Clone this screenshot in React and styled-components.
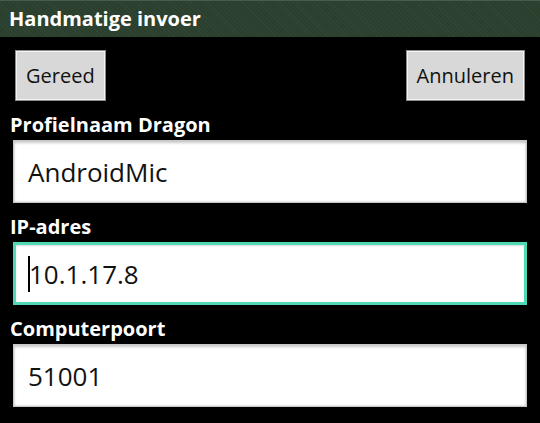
import React from 'react'
import styled, { createGlobalStyle } from 'styled-components'

const GlobalStyle = createGlobalStyle`
  html, body {
    margin: 0;
    padding: 0;
    background: #000;
  }
  body {
    font-family: 'Open Sans', 'DejaVu Sans', sans-serif;
  }
`

const Screen = styled.div`
  width: 540px;
  height: 423px;
  background: #000;
  overflow: hidden;
`

const TitleBar = styled.div`
  height: 37px;
  box-sizing: border-box;
  border-top: 1px solid #4a5a4c;
  background: #2a3f2d;
  background-image: repeating-linear-gradient(45deg, rgba(255,255,255,0.03) 0 1px, transparent 1px 3px);
  color: #fff;
  font-weight: 700;
  font-size: 20px;
  line-height: 36px;
  padding-left: 9px;
`

const ButtonRow = styled.div`
  display: flex;
  justify-content: space-between;
  padding: 13px 15px 0;
`

const Button = styled.button`
  height: 51px;
  padding: 0 9px;
  min-width: 90px;
  box-sizing: border-box;
  background: #d8d8d8;
  border: 2px solid #f4f4f4;
  outline: 1px solid #8c8c8c;
  outline-offset: -1px;
  font-family: 'Open Sans', 'DejaVu Sans', sans-serif;
  font-size: 20px;
  color: #111;
`

const Label = styled.div`
  color: #fff;
  font-weight: 700;
  font-size: 20px;
  line-height: 26px;
  padding: 11px 10px 0;
  height: 28px;
`

const Field = styled.div`
  margin: 0 13px;
  height: 63px;
  box-sizing: border-box;
  background: #fff;
  display: flex;
  align-items: center;
  font-size: 26px;
  color: #111;
  border: ${({ focused }) => (focused ? '3px solid #4fd9b5' : '1px solid #c8c8c8')};
  padding-left: ${({ focused }) => (focused ? '12px' : '14px')};
  box-shadow: ${({ focused }) => (focused ? 'inset 0 1px 2px rgba(0,0,0,0.15)' : 'inset 0 2px 3px rgba(0,0,0,0.22), inset 0 -1px 2px rgba(0,0,0,0.1)')};
`

const Caret = styled.span`
  display: inline-block;
  width: 2px;
  height: 36px;
  background: #000;
  margin-right: -1px;
`

export default function App () {
  return (
    <>
      <GlobalStyle />
      <Screen>
        <TitleBar>Handmatige invoer</TitleBar>
        <ButtonRow>
          <Button>Gereed</Button>
          <Button>Annuleren</Button>
        </ButtonRow>
        <Label>Profielnaam Dragon</Label>
        <Field>AndroidMic</Field>
        <Label>IP-adres</Label>
        <Field focused><Caret />10.1.17.8</Field>
        <Label>Computerpoort</Label>
        <Field>51001</Field>
      </Screen>
    </>
  )
}
